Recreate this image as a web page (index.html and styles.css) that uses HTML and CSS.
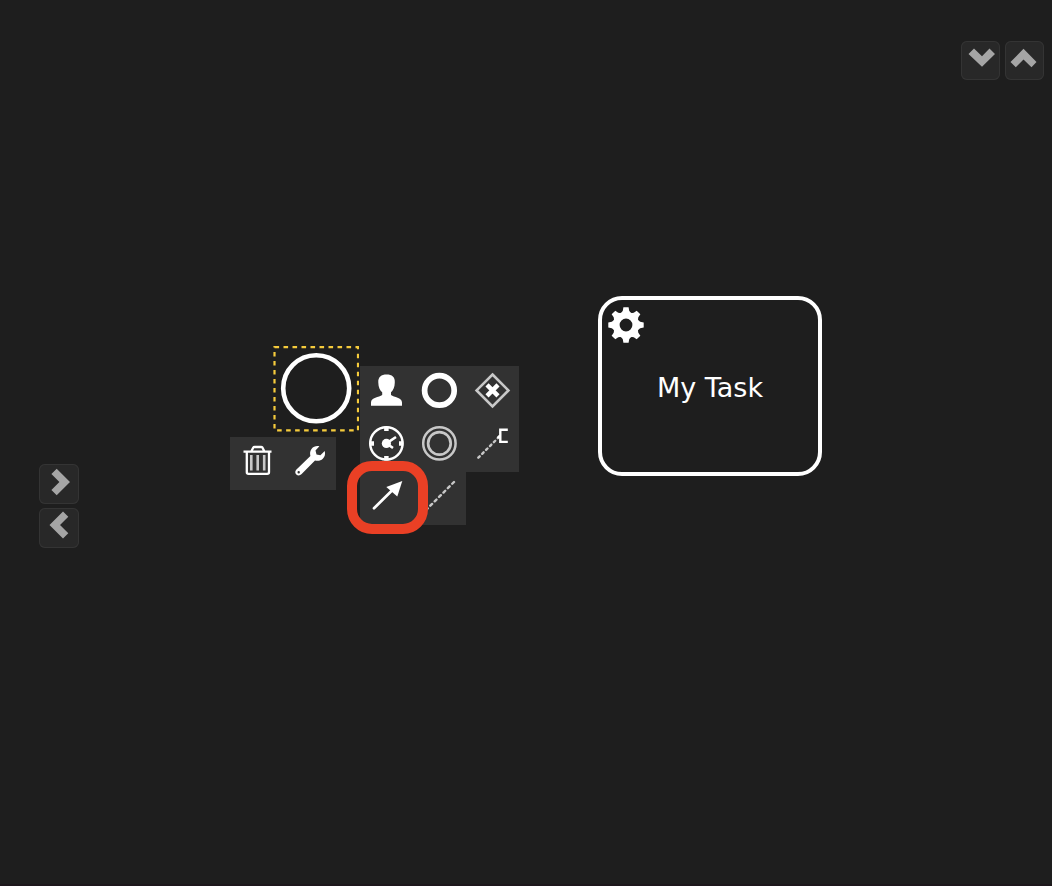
FILE: index.html
```
<!DOCTYPE html>
<html lang="en">
<head>
<meta charset="utf-8">
<title>Process editor</title>
<link rel="stylesheet" href="styles.css">
</head>
<body>
<main class="editor">
  <nav class="nav nav-top" aria-label="Panels">
    <button class="nav-button" type="button" aria-label="Expand"><svg viewBox="0 0 39 39"><path d="M7.5 13L13 7.5L21 15.2L28.5 7.5L34 13L21 25.7Z"/></svg></button>
    <button class="nav-button" type="button" aria-label="Collapse"><svg viewBox="0 0 39 39"><path d="M18.5 7.8L31.5 21L26.5 26.3L18.5 18.5L10.800 26.300L5.500 21Z"/></svg></button>
  </nav>
  <nav class="nav nav-side" aria-label="Palette">
    <button class="nav-button" type="button" aria-label="Open palette"><svg viewBox="0 0 40 40"><path d="M17.700 4.700L31 18L17.700 31.300L12.400 26L20.400 18L12.400 10Z"/></svg></button>
    <button class="nav-button" type="button" aria-label="Close palette"><svg viewBox="0 0 40 40"><path d="M24 3.500L29.300 8.800L21 17L29.300 25.200L24 30.500L10.500 17Z"/></svg></button>
  </nav>

  <section class="canvas" aria-label="Diagram">
    <svg class="start-event" viewBox="0 0 86 86" role="img" aria-label="Start event">
      <rect class="selection" x="1.500" y="1.200" width="83.500" height="83.200" stroke-width="2.200" stroke-dasharray="4.600 4.400"/>
      <circle class="event-ring" cx="43.200" cy="42.300" r="33" stroke-width="4.600"/>
    </svg>

    <div class="pad pad-append">
      <button class="entry" type="button" aria-label="Append user task"><svg viewBox="0 0 53 53"><path class="solid" d="M26.600 8.500C32 8.500 35.200 11 34.800 16.500C34.800 21 33 24.500 31 26.300V29C34 31.400 42 31.500 42 36.500V39.700H11V36.500C11 31.500 19 31.400 22.200 29V26.300C20 24.500 18.300 21 18.300 16.500C18 11 21.200 8.500 26.600 8.500Z"/></svg></button>
      <button class="entry" type="button" aria-label="Append end event"><svg viewBox="0 0 53 53"><circle class="line" cx="26.400" cy="24.400" r="14.800" stroke-width="5.700"/></svg></button>
      <button class="entry" type="button" aria-label="Append gateway"><svg viewBox="0 0 53 53"><path class="line soft" stroke-width="2.600" d="M26.500 8.500L42.400 24.400L26.500 40.300L10.600 24.400Z"/><path class="line" stroke-width="4.400" d="M21 18.900L32 29.900M32 18.900L21 29.900"/></svg></button>
      <button class="entry" type="button" aria-label="Append timer event"><svg viewBox="0 0 53 53"><circle class="line" cx="26.400" cy="24.400" r="16.200" stroke-width="2.400"/><path class="line" stroke-width="4.500" d="M26.400 7.500V12M26.400 37V41.400M9.500 24.400H14M39 24.400H43.400"/><circle class="solid" cx="26.400" cy="24.400" r="4.600"/><path class="line" stroke-width="2.600" d="M26.400 24.400L36 18M26.400 24.400L33 29"/></svg></button>
      <button class="entry" type="button" aria-label="Append intermediate event"><svg viewBox="0 0 53 53"><circle class="line soft" cx="26.400" cy="24.400" r="16.200" stroke-width="2.500"/><circle class="line soft" cx="26.400" cy="24.400" r="11.300" stroke-width="2.700"/></svg></button>
      <button class="entry" type="button" aria-label="Append annotation"><svg viewBox="0 0 53 53"><path class="line soft" stroke-width="2.400" stroke-linecap="round" stroke-dasharray="2 3.500" d="M12.300 38.700L32.500 18.500"/><path class="line" stroke-width="2.400" d="M41.800 10.700H34.300V22.900H41.800M31.500 19L34 16.500"/></svg></button>
      <button class="entry" type="button" aria-label="Connect"><svg viewBox="0 0 53 53"><path class="line" stroke-width="2.700" stroke-linecap="round" d="M14 36.200L34 16.500"/><path class="solid" d="M42.300 9L26.300 15L37.300 24.500Z"/></svg></button>
      <button class="entry" type="button" aria-label="Associate"><svg viewBox="0 0 53 53"><path class="line soft" stroke-width="2.400" stroke-linecap="round" stroke-dasharray="2.500 3.700" d="M41 10L13.500 37.500"/></svg></button>
    </div>

    <div class="pad pad-edit">
      <button class="entry" type="button" aria-label="Remove"><svg viewBox="0 0 53 53"><path class="line" stroke-width="2.300" stroke-linejoin="round" d="M13.500 14.700H41.500M16.800 15V35.300Q16.800 36.800 18.500 36.800H37.200Q39 36.800 39 35.300V15M21.500 14L23.300 10.500Q23.600 10 24.500 10H31Q32 10 32.400 10.500L34.200 14"/><path class="line soft" stroke-width="2.600" d="M21.300 18V33.500M27.700 18V33.500M34.200 18V33.500"/></svg></button>
      <button class="entry" type="button" aria-label="Change type"><svg viewBox="0 0 53 53"><path class="solid" fill-rule="evenodd" d="M36.400 9.300C33.600 8.700 30.500 9.300 28.500 12C26.800 14.300 26.900 16.500 27.400 18.900L13.200 32.800C11.800 34.300 12.100 36.200 13.300 37.500C14.700 38.800 17 38.800 18.400 37.300L32 23.400C34.500 24.200 37.700 23.900 39.800 21.800C42 19.500 42.500 17 41.700 14L37.400 18.200L33.500 17.400L32.500 13.500ZM15.700 34A1.200 1.200 0 1 1 15.700 36.400A1.200 1.200 0 1 1 15.700 34Z"/></svg></button>
    </div>

    <div class="highlight"></div>

    <div class="task">
      <svg class="gear" viewBox="-18 -18 36 36" aria-hidden="true">
        <circle class="line" r="9.800" stroke-width="6.800"/>
        <g class="solid">
          <path id="tooth" d="M-5.200 -11.500L-3.200 -14.200L-2.600 -17.700H2.600L3.200 -14.200L5.200 -11.500Z"/>
          <use href="#tooth" transform="rotate(45)"/><use href="#tooth" transform="rotate(90)"/>
          <use href="#tooth" transform="rotate(135)"/><use href="#tooth" transform="rotate(180)"/>
          <use href="#tooth" transform="rotate(225)"/><use href="#tooth" transform="rotate(270)"/>
          <use href="#tooth" transform="rotate(315)"/>
        </g>
      </svg>
      <span>My Task</span>
    </div>
  </section>
</main>
</body>
</html>
```

FILE: styles.css
```
* { box-sizing: border-box; }

body {
  margin: 0;
  background: #1e1e1e;
  color: #fff;
  font-family: "DejaVu Sans", Verdana, sans-serif;
}

.editor {
  position: relative;
  min-height: 100vh;
  overflow: hidden;
  border-bottom: 2px solid #1d171c;
}

button {
  display: block;
  margin: 0;
  padding: 0;
  border: 0;
  cursor: pointer;
}

svg { display: block; }

.nav {
  position: absolute;
  z-index: 1;
  display: flex;
}

.nav-top {
  top: 41px;
  right: 8px;
  gap: 5px;
}

.nav-side {
  top: 464px;
  left: 39px;
  flex-direction: column;
  gap: 4px;
}

.nav-button {
  width: 39px;
  height: 39px;
  border-radius: 6px;
  background: #282828;
  box-shadow: inset 0 0 0 1px #343434;
  fill: #a5a5a5;
}

.nav-side .nav-button {
  width: 40px;
  height: 40px;
}

.start-event,
.pad,
.highlight,
.task { position: absolute; }

.start-event {
  left: 273px;
  top: 346px;
  width: 86px;
  height: 86px;
}

.selection {
  fill: none;
  stroke: #f5cb3c;
}

.event-ring {
  fill: none;
  stroke: #fff;
}

.pad {
  display: flex;
  flex-wrap: wrap;
}

.pad-append {
  left: 360px;
  top: 366px;
  width: 159px;
}

.pad-edit {
  left: 230px;
  top: 437px;
  width: 106px;
}

.entry {
  width: 53px;
  height: 53px;
  background: #323232;
}

.solid { fill: #fff; }

.line {
  fill: none;
  stroke: #fff;
}

.soft { stroke: #c8c8c8; }

.highlight {
  left: 347px;
  top: 461px;
  width: 81px;
  height: 73px;
  border: 10px solid #ea4025;
  border-radius: 25px;
  pointer-events: none;
}

.task {
  left: 598px;
  top: 296px;
  width: 224px;
  height: 180px;
  display: flex;
  align-items: center;
  justify-content: center;
  border: 4px solid #fff;
  border-radius: 24px;
  padding-top: 4px;
  font-size: 27px;
  line-height: 32px;
}

.gear {
  position: absolute;
  left: 6px;
  top: 7px;
  width: 36px;
  height: 36px;
}
```
